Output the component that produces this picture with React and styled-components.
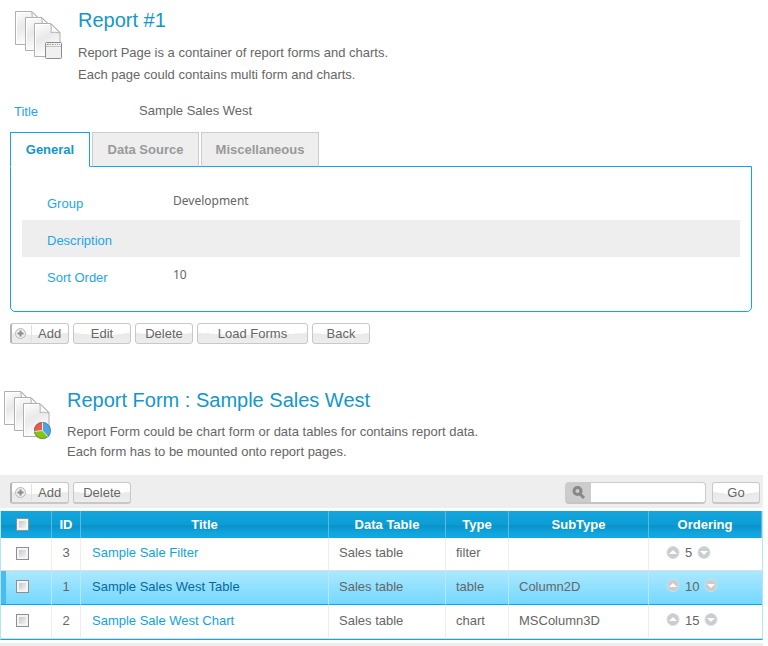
import React, { useId } from "react";
import styled, { createGlobalStyle, css } from "styled-components";

const GlobalStyle = createGlobalStyle`
  *, *::before, *::after { box-sizing: border-box; }
  body {
    margin: 0;
    background: #fff;
    color: #666;
    font: 13px/20px "Liberation Sans", Arial, sans-serif;
  }
  button, input { font: inherit; color: inherit; }
`;

const Page = styled.main`
  padding-right: 5px;
`;

const Intro = styled.header`
  display: flex;
  align-items: flex-start;
  gap: 15px;
  padding: ${(p) => (p.$compact ? "46px 0 13px 3px" : "10px 0 15px 14px")};
`;

const IntroText = styled.div`
  line-height: ${(p) => (p.$compact ? "20px" : "22px")};
`;

const Heading = styled.h1`
  margin: 0 0 11px;
  color: #1397cb;
  font-size: 20px;
  font-weight: 400;
  line-height: 21px;
`;

const Copy = styled.p`
  margin: 0;
`;

const TitleRow = styled.dl`
  display: grid;
  grid-template-columns: 125px 1fr;
  margin: 0;
  padding: 0 14px 9px;
`;

const Label = styled.dt`
  color: #1ea5ee;
  line-height: 22px;
`;

const Value = styled.dd`
  margin: 0;
  ${(p) => p.$humanist && css`
    font-family: "Noto Sans", "Open Sans", sans-serif;
    font-size: 12px;
    line-height: 16px;
  `}
`;

const Tabs = styled.div`
  display: flex;
  gap: 2px;
  padding-left: 10px;
`;

const Tab = styled.button`
  position: relative;
  width: ${(p) => p.$width};
  height: 35px;
  margin-bottom: -1px;
  padding: 0;
  border: 1px solid ${(p) => (p.$active ? "#15a4e8" : "#ccc")};
  border-bottom-color: ${(p) => (p.$active ? "#fff" : "#15a4e8")};
  background: ${(p) => (p.$active ? "#fff" : "#eee")};
  color: ${(p) => (p.$active ? "#1397cb" : "#999")};
  font-weight: 700;
`;

const Panel = styled.section`
  margin: 0 11px 0 10px;
  padding: 16px 11px 17px;
  border: 1px solid #15a4e8;
  border-radius: 0 0 5px 5px;
`;

const Details = styled.dl`
  margin: 0;
`;

const DetailRow = styled.div`
  display: grid;
  grid-template-columns: 126px 1fr;
  min-height: 37px;
  padding: 10px 25px 5px;
  background: ${(p) => (p.$shaded ? "#eee" : "transparent")};
`;

const Button = styled.button`
  display: inline-flex;
  align-items: center;
  justify-content: center;
  flex: none;
  width: ${(p) => p.$width || "58px"};
  height: 21px;
  padding: 0;
  border: 1px solid #c8c8c8;
  border-radius: 3px;
  background: radial-gradient(ellipse 75% 60% at 50% 0, #fff 96%, transparent), linear-gradient(#fff, #f4f4f4 48%, #e9e9e9 52%, #ededed);
  color: #666;
  line-height: 19px;
  ${(p) => p.$icon && css`
    border-left: 2px solid #b4b4b4;
    justify-content: flex-start;
  `}
`;

const Actions = styled.div`
  display: flex;
  gap: 4px;
  padding: 11px 10px 0;
`;

const Toolbar = styled.form`
  display: flex;
  align-items: center;
  gap: 4px;
  height: 33px;
  padding: 2px 3px 0 10px;
  background: #eee;
  ${Button} {
    height: 22px;
    border-bottom: 2px solid #c8c8c8;
  }
`;

const AddText = styled.span`
  margin-left: 3px;
  padding-left: 6px;
  border-left: 1px solid #e0e0e0;
  line-height: 17px;
`;

const SearchBox = styled.label`
  display: flex;
  align-items: center;
  width: 141px;
  height: 22px;
  margin: 0 2px 0 auto;
  overflow: hidden;
  border: 1px solid #ccc;
  border-bottom: 2px solid #c4c4c4;
  border-radius: 4px;
  background: #ccc;
`;

const SearchInput = styled.input`
  flex: 1;
  min-width: 0;
  height: 100%;
  margin-left: 5px;
  padding: 0 4px;
  border: 0;
  outline: 0;
  background: #fff;
`;

const Table = styled.table`
  width: 100%;
  margin-top: 3px;
  border-spacing: 0;
  border-left: 1px solid #b3e5fa;
  border-right: 1px solid #b3e5fa;
  border-bottom: 1px solid #0ca6f4;
  table-layout: fixed;
`;

const Col = styled.col`
  width: ${(p) => p.$width};
`;

const Th = styled.th`
  height: 27px;
  padding: 0;
  border-right: 1px solid #55bce6;
  background: linear-gradient(#13a5dd, #0d9dd5 50%, #0b91c9 55%, #10a4dc 80%, #11aae3);
  color: #fff;
  font-weight: 700;
`;

const Td = styled.td`
  padding: ${(p) => (p.$center ? "0 0 2px" : "0 10px 2px")};
  border-right: 1px solid #eee;
  border-bottom: 1px solid #ddd;
  text-align: ${(p) => (p.$center ? "center" : "left")};
  &:last-child { border-right: 0; }
`;

const Row = styled.tr`
  height: ${(p) => p.$height || "34px"};
  ${(p) => p.$selected && css`
    background: linear-gradient(#abe8ff, #8fe0ff 50%, #72d7fe);
    ${Td} { border-right-color: #b5e9fc; border-bottom-color: #0ca6f4; }
    ${Td}:first-child { box-shadow: inset 5px 0 #48baf6; }
  `}
`;

const RowLink = styled.a`
  padding-left: 1px;
  color: ${(p) => (p.$selected ? "#0868a0" : "#10a4dc")};
  text-decoration: none;
`;

const Checkbox = styled.input`
  appearance: none;
  display: block;
  width: 13px;
  height: 13px;
  margin: 0 auto 0 15px;
  padding: 2px;
  border: 1px solid #8e8f8f;
  background: linear-gradient(135deg, #c4c8d0, #f3f3f3) content-box, #f4f4f4;
  &:checked { background: #168cc5 content-box, #f4f4f4; }
`;

const Ordering = styled.div`
  display: flex;
  align-items: center;
  gap: 5px;
  padding-left: 7px;
`;

const OrderButton = styled.button`
  display: flex;
  padding: 0 0 2px;
  border: 0;
  background: none;
`;

const Footer = styled.footer`
  height: 3px;
  margin-top: 3px;
  background: #eee;
`;

function DocumentsIcon({ chart }) {
  const fill = useId();
  return (
    <svg width="49" height="50" viewBox="0 0 49 50" aria-hidden="true">
      <defs>
        <linearGradient id={fill} x2=".4" y2="1">
          <stop stopColor="#fff" />
          <stop offset=".5" stopColor="#e9e9e9" />
          <stop offset="1" stopColor="#fff" />
        </linearGradient>
      </defs>
      {[[1, 1], [11, 7], [20, 13]].map(([x, y]) => (
        <g key={x} transform={`translate(${x} ${y})`} strokeLinejoin="round">
          <path d="M.5.5H17l9 9v24H.5z" fill={`url(#${fill})`} stroke="#b0b0b0" />
          <path d="M1.5 32.5v-31H16" fill="none" stroke="#fff" />
          <path d="M16.5.5c1 3 .8 6 .5 9 3-.4 6-.2 9 .5z" fill="#fbfbfb" stroke="#b4b4b4" />
        </g>
      ))}
      {chart ? (
        <g>
          <circle cx="39.5" cy="40.5" r="8.5" fill="#4aa5e6" />
          <path d="M39.5 40.5 31 41.5A8.5 8.5 0 0 1 39.5 32z" fill="#ee5a45" />
          <path d="M39.5 40.5 31 41.5A8.5 8.5 0 0 0 45 47z" fill="#86c40e" />
          <path d="M39.5 32v8.5L45 47M39.5 40.5l-8.5 1" fill="none" stroke="#e3eed6" />
          <circle cx="39.5" cy="40.5" r="8" fill="none" stroke="#4b606a" strokeOpacity=".45" />
        </g>
      ) : (
        <g>
          <rect x="31.5" y="32.5" width="16" height="16" rx="1" fill="#f0f0f0" stroke="#8c8c8c" />
          <path d="M32 36.5h15" stroke="#c4c4c4" />
          <path d="M41 34.5h5" stroke="#aaa" strokeDasharray="1 1" />
          <path d="M33 34.5h1.5" stroke="#d85b3f" />
          <path d="M35.5 34.5H37" stroke="#d2a653" />
          <path d="M38 34.5h1.5" stroke="#6f9f72" />
        </g>
      )}
    </svg>
  );
}

function PlusIcon() {
  return (
    <svg width="16" height="15" viewBox="0 0 16 15" aria-hidden="true">
      <circle cx="8.5" cy="7.5" r="5" fill="#eee" stroke="#b9b9b9" />
      <path d="M8.5 4.5v6M5.5 7.5h6" stroke="#8c8c8c" strokeWidth="2" />
    </svg>
  );
}

function SearchIcon() {
  return (
    <svg width="20" height="16" viewBox="0 0 20 16" aria-hidden="true">
      <circle cx="11.5" cy="7" r="3.5" fill="#ccc" stroke="#888" strokeWidth="3" />
      <path d="m14 10 4 4" stroke="#888" strokeWidth="3" />
    </svg>
  );
}

function Arrow({ down }) {
  return (
    <svg width="14" height="13" viewBox="0 0 14 13" aria-hidden="true">
      <circle cx="7" cy="6.5" r="6" fill="#ccc" stroke="#cfe0e8" />
      <path d={down ? "M3 5h8l-4 4z" : "M3 8h8L7 4z"} fill="#fff" />
    </svg>
  );
}

function AddButton() {
  return <Button type="button" $icon $width="59px"><PlusIcon /><AddText>Add</AddText></Button>;
}

const forms = [
  { id: 3, title: "Sample Sale Filter", type: "filter", subtype: "", order: 5, height: "33px" },
  { id: 1, title: "Sample Sales West Table", type: "table", subtype: "Column2D", order: 10, selected: true },
  { id: 2, title: "Sample Sale West Chart", type: "chart", subtype: "MSColumn3D", order: 15 },
];

export default function App() {
  return (
    <>
      <GlobalStyle />
      <Page>
        <Intro>
          <DocumentsIcon />
          <IntroText>
            <Heading>Report #1</Heading>
            <Copy>Report Page is a container of report forms and charts.<br />Each page could contains multi form and charts.</Copy>
          </IntroText>
        </Intro>
        <TitleRow><Label>Title</Label><Value>Sample Sales West</Value></TitleRow>
        <Tabs role="tablist">
          <Tab role="tab" aria-selected="true" $active $width="80px">General</Tab>
          <Tab role="tab" aria-selected="false" $width="107px">Data Source</Tab>
          <Tab role="tab" aria-selected="false" $width="118px">Miscellaneous</Tab>
        </Tabs>
        <Panel role="tabpanel">
          <Details>
            <DetailRow><Label>Group</Label><Value $humanist>Development</Value></DetailRow>
            <DetailRow $shaded><Label>Description</Label><Value /></DetailRow>
            <DetailRow><Label>Sort Order</Label><Value $humanist>10</Value></DetailRow>
          </Details>
        </Panel>
        <Actions>
          <AddButton />
          <Button type="button">Edit</Button>
          <Button type="button">Delete</Button>
          <Button type="button" $width="111px">Load Forms</Button>
          <Button type="button">Back</Button>
        </Actions>
        <Intro $compact>
          <DocumentsIcon chart />
          <IntroText $compact>
            <Heading as="h2">Report Form : Sample Sales West</Heading>
            <Copy>Report Form could be chart form or data tables for contains report data.<br />Each form has to be mounted onto report pages.</Copy>
          </IntroText>
        </Intro>
        <Toolbar onSubmit={(e) => e.preventDefault()}>
          <AddButton />
          <Button type="button">Delete</Button>
          <SearchBox><SearchIcon /><SearchInput type="search" aria-label="Search" /></SearchBox>
          <Button $width="48px">Go</Button>
        </Toolbar>
        <Table>
          <colgroup>
            <Col $width="51px" /><Col $width="29px" /><Col /><Col $width="117px" />
            <Col $width="63px" /><Col $width="140px" /><Col $width="113px" />
          </colgroup>
          <thead>
            <tr>
              <Th><Checkbox type="checkbox" aria-label="Select all" /></Th>
              {["ID", "Title", "Data Table", "Type", "SubType", "Ordering"].map((name) => <Th key={name} scope="col">{name}</Th>)}
            </tr>
          </thead>
          <tbody>
            {forms.map((f) => (
              <Row key={f.id} $selected={f.selected} $height={f.height}>
                <Td $center><Checkbox type="checkbox" aria-label={`Select ${f.title}`} /></Td>
                <Td $center>{f.id}</Td>
                <Td><RowLink href="#" $selected={f.selected}>{f.title}</RowLink></Td>
                <Td>Sales table</Td>
                <Td>{f.type}</Td>
                <Td>{f.subtype}</Td>
                <Td>
                  <Ordering>
                    <OrderButton type="button" aria-label="Move up"><Arrow /></OrderButton>
                    {f.order}
                    <OrderButton type="button" aria-label="Move down"><Arrow down /></OrderButton>
                  </Ordering>
                </Td>
              </Row>
            ))}
          </tbody>
        </Table>
        <Footer />
      </Page>
    </>
  );
}
